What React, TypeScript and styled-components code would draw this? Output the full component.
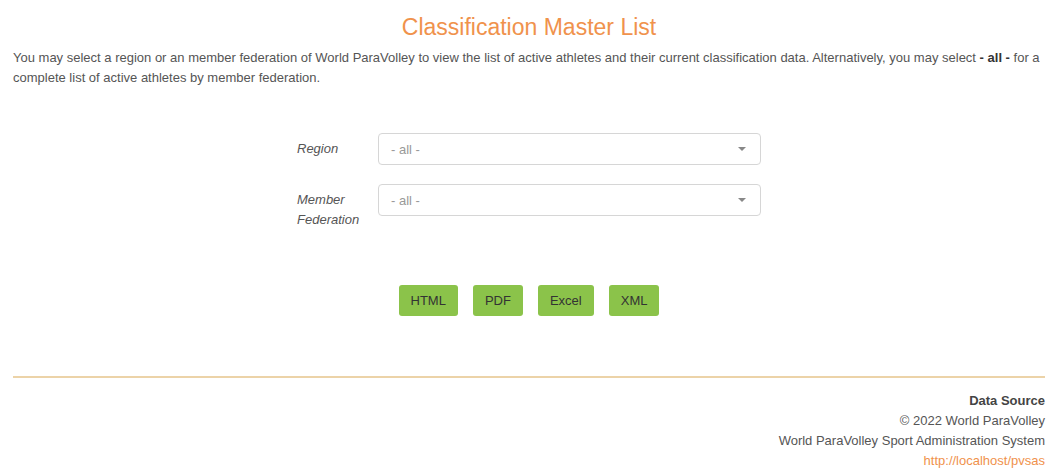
import React from "react";
import styled, { createGlobalStyle } from "styled-components";

const Global = createGlobalStyle`
  html, body { margin: 0; padding: 0; background: #ffffff; }
  body { font-family: "Liberation Sans", Arial, sans-serif; color: #555; }
`;

const Page = styled.div`
  padding: 12px 13px 0 13px;
  display: flex;
  flex-direction: column;
`;

const Title = styled.h1`
  margin: 0;
  text-align: center;
  font-size: 23px;
  line-height: 30px;
  font-weight: normal;
  color: #f0924c;
`;

const Intro = styled.p`
  margin: 6px 0 0 0;
  font-size: 13px;
  line-height: 19.5px;
  color: #555;
  b { color: #333; }
`;

const Form = styled.div`
  align-self: center;
  margin: 46px 0 0 0;
  width: 464px;
  display: grid;
  grid-template-columns: 81px 1fr;
  row-gap: 19px;
`;

const Label = styled.label`
  font-size: 13px;
  line-height: 20px;
  font-style: italic;
  color: #555;
  padding-top: 6px;
`;

const Select = styled.div`
  height: 32px;
  box-sizing: border-box;
  border: 1px solid #d6d6d6;
  border-radius: 4px;
  display: flex;
  align-items: center;
  justify-content: space-between;
  padding: 0 14px 0 12px;
  font-size: 13px;
  color: #999;
`;

const Caret = styled.span`
  width: 0;
  height: 0;
  border-left: 4px solid transparent;
  border-right: 4px solid transparent;
  border-top: 4px solid #888;
`;

const Buttons = styled.div`
  display: flex;
  justify-content: center;
  gap: 15px;
  margin-top: 55px;
`;

const Button = styled.button`
  height: 31px;
  padding: 0 12px;
  border: none;
  border-radius: 3px;
  background: #8bc34a;
  color: #333;
  font-family: "Liberation Sans", Arial, sans-serif;
  font-size: 13px;
`;

const Rule = styled.hr`
  margin: 60px 0 0 0;
  border: none;
  height: 2px;
  background: #ecd3a8;
`;

const Footer = styled.div`
  margin-top: 13px;
  text-align: right;
  font-size: 13px;
  line-height: 20px;
  color: #555;
  display: flex;
  flex-direction: column;
`;

const Strong = styled.span`
  font-weight: bold;
  color: #444;
`;

const Link = styled.a`
  color: #f0924c;
  text-decoration: none;
`;

export default function App() {
  return (
    <>
      <Global />
      <Page>
        <Title>Classification Master List</Title>
        <Intro>
          You may select a region or an member federation of World ParaVolley to view the list of active athletes and their current classification data. Alternatively, you may select <b>- all -</b> for a complete list of active athletes by member federation.
        </Intro>
        <Form>
          <Label>Region</Label>
          <Select>
            <span>- all -</span>
            <Caret />
          </Select>
          <Label>
            Member
            <br />
            Federation
          </Label>
          <Select>
            <span>- all -</span>
            <Caret />
          </Select>
        </Form>
        <Buttons>
          <Button>HTML</Button>
          <Button>PDF</Button>
          <Button>Excel</Button>
          <Button>XML</Button>
        </Buttons>
        <Rule />
        <Footer>
          <Strong>Data Source</Strong>
          <span>© 2022 World ParaVolley</span>
          <span>World ParaVolley Sport Administration System</span>
          <Link href="#">http://localhost/pvsas</Link>
        </Footer>
      </Page>
    </>
  );
}
